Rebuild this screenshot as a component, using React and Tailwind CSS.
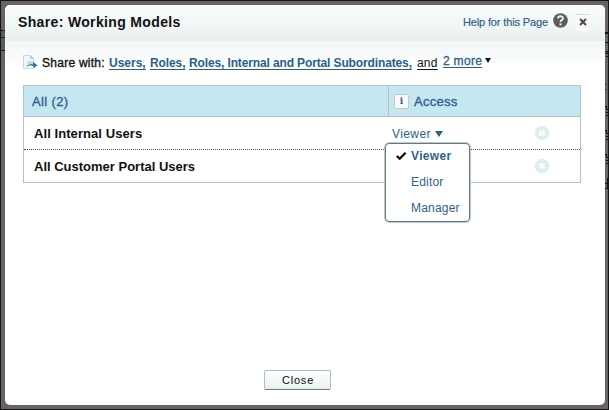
import React from "react";

function RemoveIcon() {
  return (
    <svg width="16" height="16" viewBox="0 0 16 16">
      <circle cx="8" cy="8" r="7.5" fill="#e6f0f1" />
      <circle cx="8" cy="8" r="5" fill="none" stroke="#c4e4ea" strokeWidth="1.5" strokeDasharray="1 1.5" />
      <path d="M5.500 5.500l5 5M10.500 5.500l-5 5" stroke="#fff" strokeWidth="1.700" />
    </svg>
  );
}

function ShareIcon() {
  return (
    <svg className="shrink-0" width="15" height="15" viewBox="0 0 15 15">
      <path d="M.5.5h7l3 3v10H.5z" fill="#f4f8fa" stroke="#cbd6da" />
      <path d="M7.500.5v3h3z" fill="#dceaf0" stroke="#b5c9d2" />
      <path d="M3.500 8C5 5.500 7 5 9.500 7V5.500l3 3-3 2" fill="#b8dce9" />
      <path d="M3 12.500c1-3 4-4 7-3V7l4.500 3.500L10.500 13v-1.800C8 10 5 10.500 3 12.500z" fill="#34719b" />
    </svg>
  );
}

function HelpIcon() {
  return (
    <svg className="block" width="15" height="15" viewBox="0 0 15 15">
      <circle cx="7.500" cy="7.500" r="7.300" fill="#5e5c5c" />
      <path d="M5 5.500C5 2.500 10 2.600 10 5.200 10 7 7.500 7 7.500 9" fill="none" stroke="#e8f2f4" strokeWidth="1.900" />
      <rect x="6.500" y="10.300" width="2" height="2" fill="#e8f2f4" />
    </svg>
  );
}

// Traces of the dimmed page that stay visible beside the dialog.
function BackdropEdge() {
  return (
    <svg className="absolute left-[604px] top-[29px]" width="3" height="165" viewBox="0 0 3 165" fill="none" stroke="#141414">
      <path d="M0 3h3" strokeWidth="2" />
      <path d="M0 12.500h3M3 21.500H1v2h2M3 26.500H1M0 54.500h1M0 59.500h1" />
      <path d="M0 76.500h1.500v3H3M1 82.500h2M1 85.500h2M0 100.500h1.500v3H3M1 106.500h2M1 109.500h2M0 124.500h1.500v3H3M1 130.500h2M1 133.500h2M2.500 148v11M0 153.500h3M0 158.500h3" />
    </svg>
  );
}

function Dropdown() {
  return (
    <div className="absolute left-[-5px] top-[25px] z-10 h-[81px] w-[87px] rounded-[5px] border border-[#b5cdd5] bg-white">
      <div className="h-full w-full rounded-[4px] border border-[#69777c] text-[12px] text-[#2e628c]">
        <div className="relative -mt-px flex h-[26px] items-center pl-[25px] font-bold tracking-[0.35px]">
          <svg className="absolute left-[10px] top-[8px]" width="11" height="10" viewBox="0 0 12 11">
            <path d="M1 5.500l3 3L10.500 2" fill="none" stroke="#000" strokeWidth="2.400" />
          </svg>
          Viewer
        </div>
        <div className="flex h-[26px] items-center pl-[25px] tracking-[0.2px]">Editor</div>
        <div className="flex h-[26px] items-center pl-[25px] tracking-[0.200px]">Manager</div>
      </div>
    </div>
  );
}

export default function App() {
  return (
    <div className="relative h-[410px] w-[609px] overflow-hidden border border-[#171516] bg-[#686464] p-1 font-['Liberation_Sans',Arial,sans-serif]">
      <div className="absolute left-0 top-[29px] h-[21px] w-1 border-b border-[#171516] bg-[#5e5b5b]">
        <div className="border-t border-dotted border-black" />
        <div className="mt-[6px] border-t border-dotted border-black" />
        <div className="ml-px mt-[4px] h-[5px] w-[2px] bg-[#456078]" />
      </div>
      <BackdropEdge />
      <div className="relative flex h-[400px] w-[600px] flex-col rounded-[5px] bg-white">
        <header className="flex h-[36px] shrink-0 items-start rounded-t-[5px] bg-linear-to-b from-[#fafdfd] to-[#e9efef]">
          <h1 className="ml-[13px] mt-[8px] grow whitespace-nowrap text-[14px] leading-[18px] font-bold tracking-[0.35px] text-[#111]">Share: Working Models</h1>
          <a className="mt-[10px] whitespace-nowrap text-[11px] leading-[14px] tracking-[-0.13px] text-[#28608b] [-webkit-text-stroke:0.15px]">Help for this Page</a>
          <span className="ml-[5px] mt-[8px]"><HelpIcon /></span>
          <button className="ml-[7px] mr-[14px] mt-[9px] flex h-[17px] w-[16px] items-center justify-center rounded-[2px] border border-[#f6f9f9] border-t-[#c8e2e8] bg-[#f8fafa]">
            <svg className="relative top-[-1px]" width="8" height="8" viewBox="0 0 8 8"><path d="M1 1l6 6M7 1L1 7" stroke="#4c4848" strokeWidth="2" /></svg>
          </button>
        </header>
        <div className="flex h-[44px] shrink-0 items-start bg-linear-to-b from-[#f1f6f6] to-white to-60% pl-[18px] pt-[14px] text-[12px]">
          <ShareIcon />
          <div className="ml-[4px] flex whitespace-nowrap pt-px leading-[15px] text-[#111]">
            <span className="w-[67px] tracking-[0.26px] [-webkit-text-stroke:0.35px]">Share with:</span>
            <span className="w-[41px] font-bold text-[#28608b]"><a className="underline underline-offset-2">Users,</a></span>
            <span className="w-[39px] font-bold text-[#28608b]"><a className="tracking-[-0.1px] underline underline-offset-2">Roles,</a></span>
            <span className="w-[228px] font-bold text-[#28608b]"><a className="tracking-[-0.13px] underline underline-offset-2">Roles, Internal and Portal Subordinates,</a></span>
            <span className="w-[26px]"><span className="tracking-[0.2px] underline underline-offset-2">and</span></span>
            <a className="-mt-[2px] tracking-[0.3px] text-[#28608b] underline underline-offset-2 [-webkit-text-stroke:0.3px]">2 more</a>
            <svg className="ml-[3px] mt-[2px]" width="6" height="5" viewBox="0 0 6 5"><path d="M0 0h6L3 5z" fill="#161616" /></svg>
          </div>
        </div>
        <section className="ml-[18px] flex h-[98px] w-[558px] flex-col border border-[#b4c1c9]">
          <div className="flex h-[31px] border-b border-[#b4c1c9] bg-[#c5e7f1] text-[#2f628b]">
            <div className="flex w-[365px] items-center border-r border-[#b4c1c9] pl-[8px] text-[13px]"><span className="relative top-px tracking-[0.35px] [-webkit-text-stroke:0.35px]">All (2)</span></div>
            <div className="flex items-center pl-[5px] text-[13px]">
              <span className="mr-[5px] flex h-[15px] w-[15px] items-center justify-center rounded-[2px] border border-[#c0c7cb] bg-[#f9fbfb] font-['DejaVu_Serif',serif] text-[9px] font-bold leading-none">i</span>
              <span className="relative top-px tracking-[0.25px] [-webkit-text-stroke:0.35px]">Access</span>
            </div>
          </div>
          <div className="flex h-[33px] items-center border-b border-dotted border-[#4f4f4f] text-[13px]">
            <div className="w-[365px] pl-[10px] font-bold text-[#111]"><span className="relative top-px tracking-[0.07px]">All Internal Users</span></div>
            <div className="relative flex h-full w-[145px] items-center pl-[3px] text-[12px] text-[#28608b]">
              <span className="relative top-px tracking-[0.4px]">Viewer</span>
              <svg className="relative top-px ml-[4px]" width="8" height="6" viewBox="0 0 8 6"><path d="M0 0h8L4 6z" fill="#28608b" /></svg>
              <Dropdown />
            </div>
            <RemoveIcon />
          </div>
          <div className="flex h-[32px] items-center text-[13px]">
            <div className="w-[510px] pl-[10px] font-bold text-[#111]"><span className="relative top-px">All Customer Portal Users</span></div>
            <RemoveIcon />
          </div>
        </section>
        <button className="relative left-[-8px] mx-auto mb-[15px] mt-auto h-[20px] w-[67px] rounded-[2px] border border-[#adbec7] border-b-[#737c80] bg-linear-to-b from-white to-[#e9f0f1] pl-[2px] text-[11px] leading-[18px] tracking-[0.800px] text-[#111]">Close</button>
      </div>
    </div>
  );
}
